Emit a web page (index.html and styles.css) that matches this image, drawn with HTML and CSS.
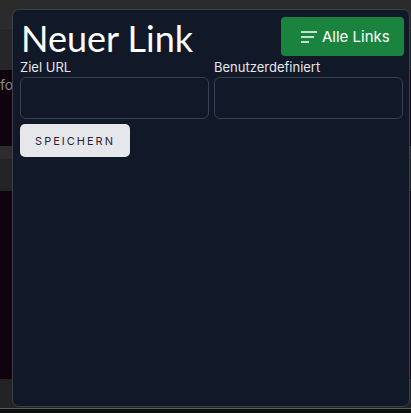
FILE: index.html
```html
<!DOCTYPE html>
<html lang="de">
<head>
  <meta charset="UTF-8">
  <title>Neuer Link</title>
  <link rel="stylesheet" href="styles.css">
</head>
<body>

  <div class="fondo">
    <div class="franja gris-a"></div>
    <div class="franja gris-b"></div>
    <div class="franja morado"><span class="texto-fondo">fo</span></div>
    <div class="franja gris-c"></div>
    <div class="franja gris-d"></div>
    <div class="franja morado alto"></div>
    <div class="franja gris-e"></div>
    <div class="franja linea"></div>
  </div>

  <div class="modal">
    <div class="cabecera">
      <h1>Neuer Link</h1>
      <button class="btn-links">
        <svg width="18" height="14" viewBox="0 0 18 14">
          <path d="M1 2h16M1 7h13M1 12h8" stroke="#fff" stroke-width="1.6" fill="none"/>
        </svg>
        Alle Links
      </button>
    </div>

    <form class="formulario">
      <div class="campos">
        <div class="campo">
          <label>Ziel URL</label>
          <input type="text">
        </div>
        <div class="campo">
          <label>Benutzerdefiniert</label>
          <input type="text">
        </div>
      </div>
      <button type="submit" class="btn-guardar">Speichern</button>
    </form>
  </div>

</body>
</html>
```

FILE: styles.css
```css
body {
  margin: 0;
  background-color: #0b0e0e;
  font-family: Inter, "Noto Sans", sans-serif;
  position: relative;
  height: 413px;
  overflow: hidden;
}

.franja {
  height: 28px;
  background: #2b2b2b;
}

.gris-b { background: #262626; border-top: 1px solid #303030; height: 41px; }
.morado { height: 76px; background: #10030d; }
.morado.alto { height: 188px; }
.gris-c { height: 13px; background: #2d2d2d; }
.gris-d { height: 32px; background: #242424; }
.gris-e { height: 29px; background: #232323; }
.linea { height: 1px; background: #5a5a5a; }

.texto-fondo {
  display: inline-block;
  margin-top: 6px;
  color: #8a8a8a;
  font-size: 14px;
}

.modal {
  position: absolute;
  left: 12px;
  top: 9px;
  width: 398px;
  height: 398px;
  background: #111827;
  border: 1px solid #3b3f47;
  border-radius: 7px;
  padding: 0 6px 0 7px;
  box-sizing: border-box;
}

.cabecera {
  display: flex;
  justify-content: space-between;
  align-items: flex-start;
  padding-top: 7px;
}

h1 {
  margin: 0;
  color: #fff;
  font-family: Lato, Inter, sans-serif;
  font-weight: 400;
  font-size: 36px;
  line-height: 42px;
  padding-left: 1px;
}

.btn-links {
  display: flex;
  align-items: center;
  gap: 4px;
  background: #1a843f;
  color: #fff;
  border: none;
  border-radius: 4px;
  height: 39px;
  width: 123px;
  padding: 0 0 0 19px;
  font-family: inherit;
  font-size: 15px;
  margin-right: -1px;
}

.campos {
  display: flex;
  gap: 5px;
}

.campo {
  flex: 1;
}

label {
  display: block;
  color: #e5e7eb;
  font-size: 13px;
  line-height: 16px;
}

input {
  display: block;
  width: 100%;
  box-sizing: border-box;
  height: 42px;
  margin-top: 2px;
  background: transparent;
  border: 1px solid #374151;
  border-radius: 6px;
}

.btn-guardar {
  margin-top: 5px;
  width: 110px;
  height: 33px;
  background: #e5e7eb;
  color: #2b1d35;
  border: none;
  border-radius: 5px;
  font-family: inherit;
  font-size: 11px;
  letter-spacing: 2px;
  text-transform: uppercase;
}
```
